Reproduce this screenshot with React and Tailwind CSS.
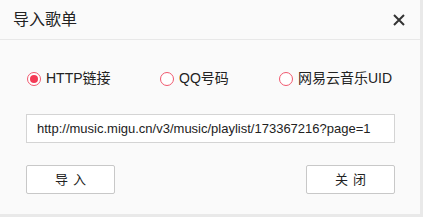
import React, { useState } from 'react'

const OPTIONS = [
  { label: 'HTTP链接', value: 'http', width: 'w-[133px]' },
  { label: 'QQ号码', value: 'qq', width: 'w-[119px]' },
  { label: '网易云音乐UID', value: 'netease', width: 'w-[120px]' },
]

function Radio({ checked }) {
  return (
    <span className="flex h-[14px] w-[14px] items-center justify-center rounded-full border border-[#f0586e] bg-white">
      {checked && <span className="h-[8px] w-[8px] rounded-full bg-[#f43a55]" />}
    </span>
  )
}

export default function App() {
  const [type, setType] = useState('http')

  return (
    <div className="h-[217px] w-[423px] bg-[#e9e9e9]" style={{ fontFamily: '"Liberation Sans", "Noto Sans CJK SC", sans-serif' }}>
      <div className="h-[214px] w-[420px] bg-[#fafafa] text-[#222]">
        {/* header */}
        <div className="flex h-[40px] items-center justify-between border-b border-[#e8e8e8] pl-[13px] pr-[15px]">
          <span className="text-[16px]">导入歌单</span>
          <svg width="12" height="12" viewBox="0 0 12 12" className="text-[#333]">
            <path d="M1 1L11 11M11 1L1 11" stroke="currentColor" strokeWidth="2" />
          </svg>
        </div>

        {/* radios */}
        <div className="flex pl-[27px] pt-[28px]">
          {OPTIONS.map((option) => (
            <label
              key={option.value}
              onClick={() => setType(option.value)}
              className={`flex items-center gap-[5px] text-[14px] ${option.width}`}
            >
              <Radio checked={type === option.value} />
              {option.label}
            </label>
          ))}
        </div>

        {/* url input */}
        <div className="px-[26px] pt-[25px]">
          <input
            defaultValue="http://music.migu.cn/v3/music/playlist/173367216?page=1"
            className="h-[29px] w-[369px] border border-[#d4d4d4] bg-white px-[10px] text-[13px] text-[#222] outline-none"
          />
        </div>

        {/* buttons */}
        <div className="flex justify-between px-[26px] pt-[22px]">
          <button className="h-[29px] w-[89px] rounded-[2px] border border-[#c8c8c8] bg-white text-[13px] tracking-[5px] pl-[5px]">导入</button>
          <button className="mr-[-1px] h-[29px] w-[89px] rounded-[2px] border border-[#c8c8c8] bg-white text-[13px] tracking-[5px] pl-[5px]">关闭</button>
        </div>
      </div>
    </div>
  )
}
